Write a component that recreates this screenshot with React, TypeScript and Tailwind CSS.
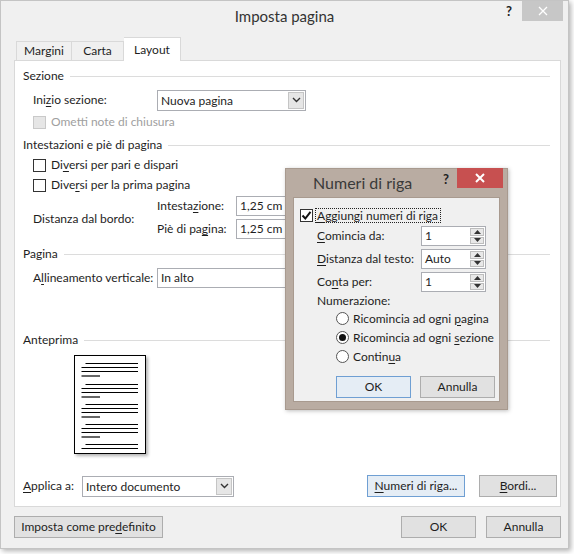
import React from "react";

function U({ children }: { children: React.ReactNode }) {
  return <span className="underline underline-offset-[2px]">{children}</span>;
}

function GroupHeader({ label }: { label: string }) {
  return (
    <div className="flex h-[16px] items-center">
      <span>{label}</span>
      <div className="ml-[6px] h-px flex-1 bg-[#dcdcdc]" />
    </div>
  );
}

function Checkbox({ checked, disabled }: { checked?: boolean; disabled?: boolean }) {
  return (
    <span
      className={
        disabled
          ? "flex h-[13px] w-[13px] shrink-0 items-center justify-center border border-[#c9c9c9] bg-[#e6e6e6]"
          : "flex h-[13px] w-[13px] shrink-0 items-center justify-center border border-[#333333] bg-white"
      }
    >
      {checked && (
        <svg width="11" height="11" viewBox="0 0 11 11">
          <path d="M1.5 5.5 L4.3 8.5 L9.5 1.8" fill="none" stroke="#111" strokeWidth="2" />
        </svg>
      )}
    </span>
  );
}

function Radio({ checked }: { checked?: boolean }) {
  return (
    <span className="flex h-[13px] w-[13px] shrink-0 items-center justify-center rounded-full border border-[#555555] bg-white">
      {checked && <span className="h-[7px] w-[7px] rounded-full bg-[#111]" />}
    </span>
  );
}

function Chevron() {
  return (
    <svg width="9" height="6" viewBox="0 0 9 6">
      <polyline points="1,1 4.5,4.5 8,1" fill="none" stroke="#333" strokeWidth="1.4" />
    </svg>
  );
}

function Select({ value, className }: { value: string; className: string }) {
  return (
    <div className={"flex h-[21px] border border-[#abadb3] bg-white " + className}>
      <span className="flex-1 truncate pl-[3px] leading-[19px]">{value}</span>
      <span className="m-px flex w-[16px] items-center justify-center border border-[#c5c5c5] bg-[#e6e6e6]">
        <Chevron />
      </span>
    </div>
  );
}

function TextBox({ value, className }: { value: string; className: string }) {
  return (
    <div className={"flex h-[20px] border border-[#abadb3] bg-white " + className}>
      <span className="pl-[3px] leading-[18px]">{value}</span>
    </div>
  );
}

function Arrow({ up }: { up?: boolean }) {
  return (
    <svg width="7" height="4" viewBox="0 0 7 4">
      <polygon points={up ? "0,4 3.5,0 7,4" : "0,0 3.5,4 7,0"} fill="#333" />
    </svg>
  );
}

function Spin({ value }: { value: string }) {
  return (
    <div className="flex h-[20px] w-[65px] border border-[#abadb3] bg-white">
      <span className="flex-1 pl-[3px] leading-[18px]">{value}</span>
      <div className="flex w-[16px] flex-col gap-px p-px">
        <span className="flex flex-1 items-center justify-center border border-[#bdbdbd] bg-[#e8e8e8]">
          <Arrow up />
        </span>
        <span className="flex flex-1 items-center justify-center border border-[#bdbdbd] bg-[#e8e8e8]">
          <Arrow />
        </span>
      </div>
    </div>
  );
}

function Button({
  children,
  focused,
  className,
}: {
  children: React.ReactNode;
  focused?: boolean;
  className: string;
}) {
  return (
    <div
      className={
        (focused
          ? "border-[#6f9fd3] bg-[#e5edf5] "
          : "border-[#adadad] bg-[#e1e1e1] ") +
        "flex h-[22px] items-center justify-center border " +
        className
      }
    >
      {children}
    </div>
  );
}

function PagePreview() {
  const groups = [8, 29, 49, 69];
  return (
    <div className="h-[99px] w-[72px] shadow-[2px_2px_3px_rgba(0,0,0,0.3)]">
      <svg width="72" height="99" viewBox="0 0 72 99">
        <rect x="0.5" y="0.5" width="71" height="98" fill="#fff" stroke="#000" />
        {groups.map((g) => (
          <g key={g} stroke="#000" strokeWidth="1.2">
            <line x1="11.5" y1={g + 0.5} x2="64" y2={g + 0.5} />
            <line x1="7.5" y1={g + 4.5} x2="64" y2={g + 4.5} />
            <line x1="7.5" y1={g + 8.5} x2="64" y2={g + 8.5} />
            <line x1="7.5" y1={g + 13} x2="26" y2={g + 13} />
          </g>
        ))}
        <g stroke="#000" strokeWidth="1.2">
          <line x1="11.5" y1="89.5" x2="64" y2="89.5" />
          <line x1="7.5" y1="93.5" x2="64" y2="93.5" />
        </g>
      </svg>
    </div>
  );
}

function LineNumbersDialog() {
  return (
    <div className="absolute left-[285px] top-[168px] w-[223px] border border-[#a89a8f] bg-[#b9aca2] px-[7px] pb-[7px] shadow-[1px_1px_4px_rgba(0,0,0,0.25)]">
      <div className="flex h-[28px] items-start">
        <span className="flex-1 pl-[20px] pt-[4px] text-[16px] leading-[20px] text-[#3a3a3a]">
          Numeri di riga
        </span>
        <span className="mr-[8px] pt-[2px] text-[13px] font-bold leading-[16px] text-[#222]">?</span>
        <span className="-mr-[3px] -mt-px flex h-[20px] w-[46px] items-center justify-center bg-[#c75050]">
          <svg width="10" height="10" viewBox="0 0 10 10">
            <path d="M1 1 L9 9 M9 1 L1 9" stroke="#fff" strokeWidth="2" />
          </svg>
        </span>
      </div>
      <div className="flex h-[205px] flex-col border border-[#a89a8f] bg-[#f0f0f0] pl-[6px]">
        <div className="mt-[9px] flex h-[16px] items-center">
          <Checkbox checked />
          <span className="ml-[2px] border border-dotted border-[#222] pl-[1px] pr-[2px] leading-[13px]">
            <U>A</U>ggiungi numeri di riga
          </span>
        </div>
        <div className="ml-[17px] mt-[3px] flex flex-col gap-[3px]">
          <div className="flex h-[20px] items-center">
            <span className="w-[104px]">
              <U>C</U>omincia da:
            </span>
            <Spin value="1" />
          </div>
          <div className="flex h-[20px] items-center">
            <span className="w-[104px]">
              <U>D</U>istanza dal testo:
            </span>
            <Spin value="Auto" />
          </div>
          <div className="flex h-[20px] items-center">
            <span className="w-[104px]">
              Co<U>n</U>ta per:
            </span>
            <Spin value="1" />
          </div>
        </div>
        <div className="ml-[17px] mt-[1px] flex h-[16px] items-center">Numerazione:</div>
        <div className="ml-[36px] flex flex-col">
          <div className="flex h-[19px] items-center gap-[4px]">
            <Radio />
            <span>
              Ricomincia ad ogni <U>p</U>agina
            </span>
          </div>
          <div className="flex h-[19px] items-center gap-[4px]">
            <Radio checked />
            <span>
              Ricomincia ad ogni <U>s</U>ezione
            </span>
          </div>
          <div className="flex h-[19px] items-center gap-[4px]">
            <Radio />
            <span>
              Contin<U>u</U>a
            </span>
          </div>
        </div>
        <div className="ml-[36px] mt-[10px] flex gap-[9px]">
          <Button focused className="w-[75px]">
            OK
          </Button>
          <Button className="w-[75px]">Annulla</Button>
        </div>
      </div>
    </div>
  );
}

export default function App() {
  return (
    <div className="relative h-[554px] w-[574px] overflow-hidden bg-white font-['Lato','Noto_Sans',sans-serif] text-[12px] text-[#1e1e1e]">
      <div className="flex h-[549px] w-[569px] flex-col border border-[#c4c4c4] bg-[#f0f0f0] shadow-[2px_2px_5px_rgba(0,0,0,0.3)]">
        {/* title bar */}
        <div className="grid h-[37px] grid-cols-[90px_1fr_90px] items-start">
          <div />
          <div className="pt-[5px] text-center text-[15px] leading-[20px] text-[#333]">Imposta pagina</div>
          <div className="flex justify-end">
            <span className="mr-[10px] pt-[2px] text-[13px] font-bold leading-[16px] text-[#222]">?</span>
            <span className="mr-[5px] flex h-[20px] w-[41px] items-center justify-center bg-[#c7c7c7]">
              <svg width="10" height="10" viewBox="0 0 10 10">
                <path d="M1 1 L9 9 M9 1 L1 9" stroke="#fff" strokeWidth="1.3" />
              </svg>
            </span>
          </div>
        </div>

        {/* tabs */}
        <div className="flex h-[22px] items-end pl-[15px]">
          <div className="flex h-[19px] w-[56px] items-center justify-center border border-b-0 border-[#d9d9d9] bg-[#f0f0f0]">
            Margini
          </div>
          <div className="flex h-[19px] w-[52px] items-center justify-center border border-b-0 border-l-0 border-[#d9d9d9] bg-[#f0f0f0]">
            Carta
          </div>
          <div className="relative z-10 -mb-px flex h-[24px] w-[57px] items-start justify-center border border-b-0 border-l-0 border-[#d9d9d9] bg-white pt-[3px]">
            Layout
          </div>
        </div>

        {/* panel */}
        <div className="ml-[13px] flex h-[447px] w-[547px] flex-col border border-[#d9d9d9] bg-white pl-[8px] pr-[10px] pt-[7px]">
          <GroupHeader label="Sezione" />
          <div className="ml-[10px] mt-[6px] flex h-[20px] items-center">
            <span className="w-[124px]">
              Ini<U>z</U>io sezione:
            </span>
            <Select value="Nuova pagina" className="w-[149px]" />
          </div>
          <div className="ml-[10px] mt-[4px] flex h-[16px] items-center gap-[5px]">
            <Checkbox disabled />
            <span className="text-[#a0a0a0]">Ometti note di chiusura</span>
          </div>

          <div className="mt-[7px]">
            <GroupHeader label="Intestazioni e piè di pagina" />
          </div>
          <div className="ml-[10px] mt-[4px] flex h-[16px] items-center gap-[5px]">
            <Checkbox />
            <span>
              Di<U>v</U>ersi per pari e dispari
            </span>
          </div>
          <div className="ml-[10px] mt-[4px] flex h-[16px] items-center gap-[5px]">
            <Checkbox />
            <span>
              Dive<U>r</U>si per la prima pagina
            </span>
          </div>
          <div className="ml-[10px] mt-[3px] flex items-center">
            <span className="w-[124px] pt-[2px]">Distanza dal bordo:</span>
            <div className="flex flex-col gap-[3px]">
              <div className="flex h-[20px] items-center">
                <span className="w-[79px]">
                  Intesta<U>z</U>ione:
                </span>
                <TextBox value="1,25 cm" className="w-[70px]" />
              </div>
              <div className="flex h-[20px] items-center">
                <span className="w-[79px]">
                  Piè di pa<U>g</U>ina:
                </span>
                <TextBox value="1,25 cm" className="w-[70px]" />
              </div>
            </div>
          </div>

          <div className="mt-[7px]">
            <GroupHeader label="Pagina" />
          </div>
          <div className="ml-[10px] mt-[6px] flex h-[20px] items-center">
            <span className="w-[124px]">
              A<U>l</U>lineamento verticale:
            </span>
            <TextBox value="In alto" className="w-[149px]" />
          </div>

          <div className="mt-[44px]">
            <GroupHeader label="Anteprima" />
          </div>
          <div className="ml-[51px] mt-[7px]">
            <PagePreview />
          </div>

          <div className="-mr-[7px] mt-[21px] flex h-[22px] items-center">
            <span className="w-[59px]">
              <U>A</U>pplica a:
            </span>
            <Select value="Intero documento" className="w-[152px]" />
            <div className="flex-1" />
            <Button focused className="w-[98px]">
              <span>
                <U>N</U>umeri di riga...
              </span>
            </Button>
            <Button className="ml-[14px] w-[78px]">
              <span>
                <U>B</U>ordi...
              </span>
            </Button>
          </div>
        </div>

        {/* bottom buttons */}
        <div className="ml-[13px] mt-[9px] flex w-[547px] items-center">
          <Button className="w-[149px]">
            <span>
              Imposta come pre<U>d</U>efinito
            </span>
          </Button>
          <div className="flex-1" />
          <Button className="w-[75px]">OK</Button>
          <Button className="ml-[10px] w-[75px]">Annulla</Button>
        </div>
      </div>

      <LineNumbersDialog />
    </div>
  );
}
